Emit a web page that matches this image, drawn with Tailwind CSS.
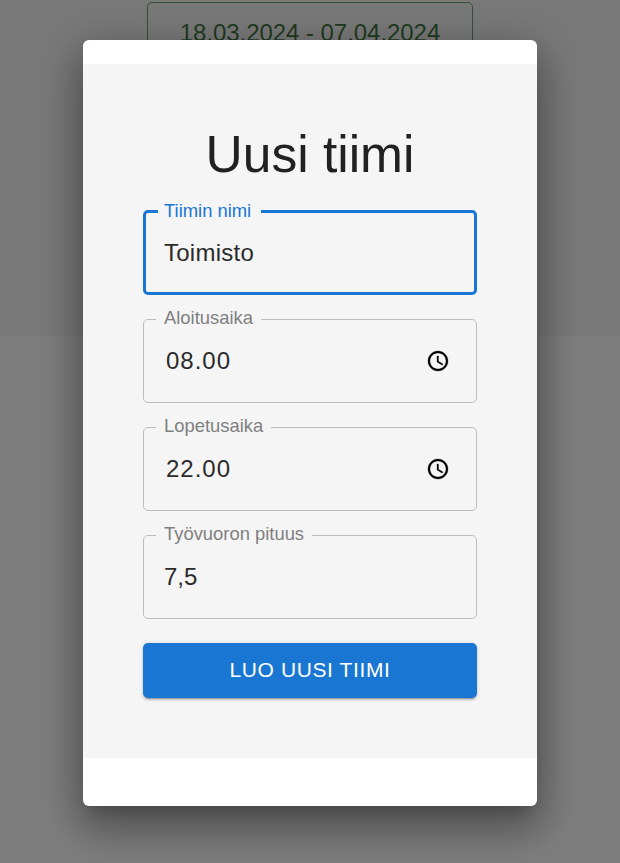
<!DOCTYPE html>
<html lang="fi">
<head>
    <meta charset="UTF-8">
    <title>Uusi tiimi</title>
    <script src="https://cdn.jsdelivr.net/npm/@tailwindcss/browser@4"></script>
</head>
<body class="font-['Liberation_Sans',sans-serif]">
    <!-- Page behind the modal -->
    <div class="h-[863px] overflow-hidden bg-[#fafafa]">
        <div class="h-[336px] bg-[#f2f2f2] pt-[2px]">
            <div class="mx-auto w-[326px] h-[64px] border border-[#2e7d32]/70 rounded-[5px] pt-[16px] text-center text-[24px] leading-[28px] tracking-[-0.05px] text-[#1b5e20]/85">18.03.2024 - 07.04.2024</div>
        </div>
    </div>

    <!-- Backdrop -->
    <div class="fixed inset-0 bg-black/50"></div>

    <!-- Modal -->
    <div class="fixed left-[83px] top-[40px] w-[454px] h-[766px] pt-[24px] bg-white rounded-[6px] shadow-[0_11px_15px_-7px_rgba(0,0,0,0.2),0_24px_38px_3px_rgba(0,0,0,0.22),0_9px_46px_8px_rgba(0,0,0,0.2)]">
        <div class="h-[694px] bg-[#f5f5f5] px-[60px] pt-[60px]">
            <h1 class="text-center text-[51.5px] leading-[60px] text-[#212121] mb-[26px]">Uusi tiimi</h1>

            <div class="flex flex-col gap-[24px]">
                <div class="relative h-[85px] border-[3px] border-[#1976d2] rounded-[5px] pl-[18px] pr-[26px] flex items-center">
                    <span class="absolute left-[12px] -top-[12px] pl-[6px] pr-[10px] bg-[#f5f5f5] text-[18.4px] leading-[20px] text-[#1976d2]">Tiimin nimi</span>
                    <span class="text-[24px] leading-[28px] tracking-[0.25px] text-[#2b2b2b]">Toimisto</span>
                </div>

                <div class="relative h-[84px] border border-[#bdbdbd] rounded-[5px] pl-[22px] pr-[26px] flex items-center justify-between">
                    <span class="absolute left-[12px] -top-[12px] px-[8px] bg-[#f5f5f5] text-[18.4px] leading-[20px] text-[#808080]">Aloitusaika</span>
                    <span class="text-[24px] leading-[28px] tracking-[1px] text-[#2b2b2b]">08.00</span>
                    <svg class="w-[24px] h-[24px]" viewBox="0 0 24 24" fill="#000" stroke="#000" stroke-width="0.3"><path d="M11.99 2C6.47 2 2 6.48 2 12s4.47 10 9.99 10C17.52 22 22 17.52 22 12S17.52 2 11.99 2zM12 20c-4.42 0-8-3.58-8-8s3.58-8 8-8 8 3.58 8 8-3.58 8-8 8zm.5-13H11v6l5.25 3.15.75-1.23-4.5-2.67z"/></svg>
                </div>

                <div class="relative h-[84px] border border-[#bdbdbd] rounded-[5px] pl-[22px] pr-[26px] flex items-center justify-between">
                    <span class="absolute left-[12px] -top-[12px] px-[8px] bg-[#f5f5f5] text-[18.4px] leading-[20px] text-[#808080]">Lopetusaika</span>
                    <span class="text-[24px] leading-[28px] tracking-[1px] text-[#2b2b2b]">22.00</span>
                    <svg class="w-[24px] h-[24px]" viewBox="0 0 24 24" fill="#000" stroke="#000" stroke-width="0.3"><path d="M11.99 2C6.47 2 2 6.48 2 12s4.47 10 9.99 10C17.52 22 22 17.52 22 12S17.52 2 11.99 2zM12 20c-4.42 0-8-3.58-8-8s3.58-8 8-8 8 3.58 8 8-3.58 8-8 8zm.5-13H11v6l5.25 3.15.75-1.23-4.5-2.67z"/></svg>
                </div>

                <div class="relative h-[84px] border border-[#bdbdbd] rounded-[5px] pl-[20px] flex items-center">
                    <span class="absolute left-[12px] -top-[12px] px-[8px] bg-[#f5f5f5] text-[18.4px] leading-[20px] text-[#808080]">Työvuoron pituus</span>
                    <span class="text-[24px] leading-[28px] text-[#2b2b2b]">7,5</span>
                </div>

                <button class="h-[55px] pb-[2px] rounded-[5px] bg-[#1976d2] text-white text-[21px] tracking-[0.6px] shadow-[0_3px_1px_-2px_rgba(0,0,0,0.2),0_2px_2px_0_rgba(0,0,0,0.14),0_1px_5px_0_rgba(0,0,0,0.12)]">LUO UUSI TIIMI</button>
            </div>
        </div>
    </div>
</body>
</html>
